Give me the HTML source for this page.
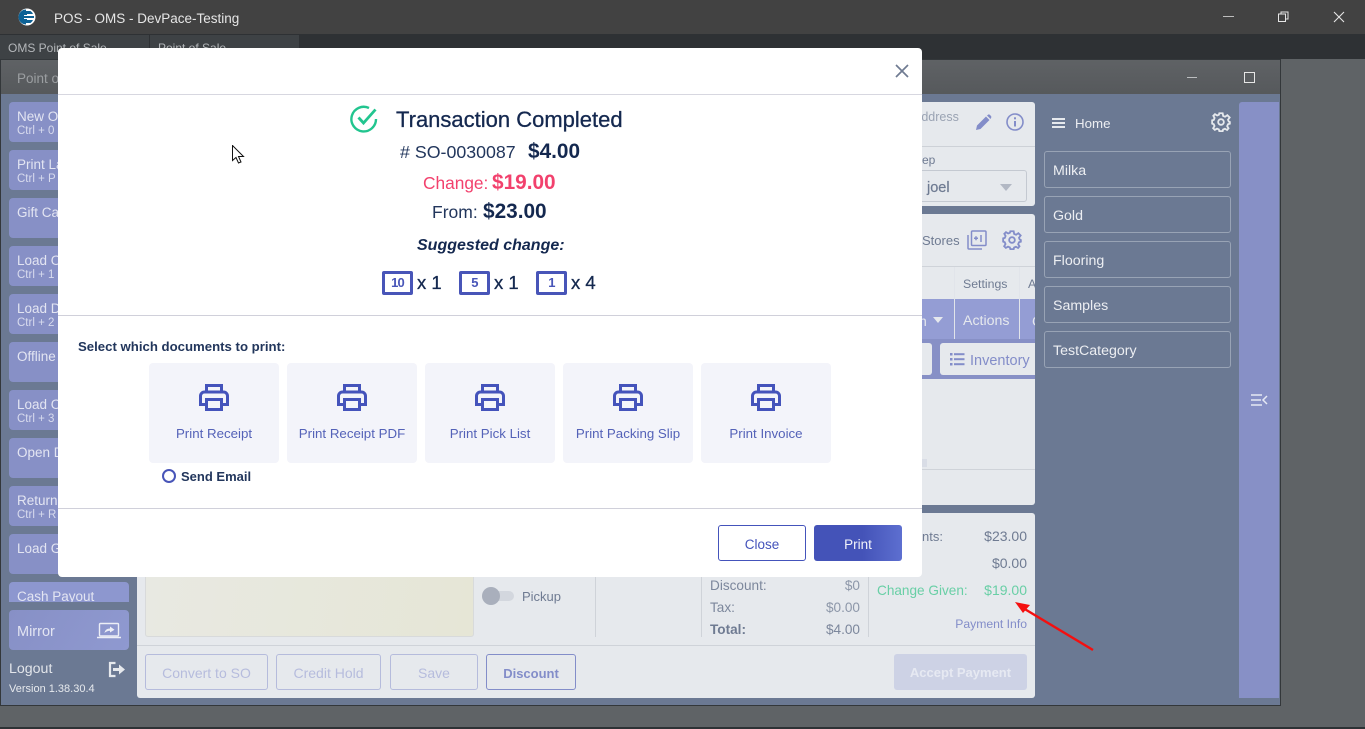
<!DOCTYPE html>
<html><head><meta charset="utf-8"><title>POS - OMS - DevPace-Testing</title>
<style>
html,body{margin:0;padding:0;width:1365px;height:729px;overflow:hidden;background:#5f6366;font-family:"Liberation Sans",sans-serif}
div,span.t{position:absolute;box-sizing:border-box}
.t{position:absolute;white-space:nowrap;line-height:20px;height:20px;margin-top:1px}
.c{text-align:center}
.sb{left:9px;width:120px;height:40px;border-radius:4px;background:#8790c6;color:#e3e5f2;overflow:hidden}
.sb .a{position:absolute;left:8px;top:7px;font-size:13.5px;line-height:16px;white-space:nowrap}
.sb .b{position:absolute;left:8px;top:22px;font-size:11.5px;line-height:14px;white-space:nowrap;color:#d8dbee}
.cat{left:1044px;width:187px;height:37px;border:1px solid #98a3b5;border-radius:3px;color:#eceef2;font-size:14.2px;line-height:38px;padding-left:8px}
.panel{background:#e6e9ed;border-radius:3px}
.g{color:#6f7b92}
.doc{top:363px;width:130px;height:100px;background:#f3f4fa;border-radius:4px}
.doc svg{position:absolute;left:50px;top:21px}
.doc span{position:absolute;left:0;width:130px;top:60px;text-align:center;color:#5462b8;font-size:13.3px;line-height:20px;white-space:nowrap;margin-top:1px}
.dis{top:654px;height:36px;border:1px solid #b5bbdc;border-radius:3px;color:#b6bcdd;font-size:14px;line-height:37px;text-align:center}
.nav{color:#0f2a52}
.bill{top:271px;width:31px;height:24px;border:3px solid #4855b8;border-radius:2px;color:#4855b8;font-size:13px;font-weight:bold;line-height:18px;text-align:center;letter-spacing:-.8px}
</style></head><body>

<div style="left:0;top:0;width:1365px;height:34px;background:#424242"></div>
<div style="left:0;top:34px;width:1365px;height:25px;background:#2e3134"></div>
<div style="left:0;top:35px;width:149px;height:24px;background:#3e4245"></div>
<div style="left:150px;top:35px;width:149px;height:24px;background:#3e4245"></div>
<svg style="position:absolute;left:18px;top:8px" width="18" height="18" viewBox="0 0 18 18"><circle cx="9" cy="9" r="8.5" fill="#fff"/><path d="M8 1.5A7.5 7.5 0 0 0 8 16.5Z" fill="#0d6296"/><path d="M8 3H12.5A7 7 0 0 1 15 6H9V8H16V10H9V12H15A7 7 0 0 1 12.5 15H8Z" fill="#0d6296"/><path d="M6 7.5H13M6 10.5H13" stroke="#fff" stroke-width="1"/></svg>
<span class="t" style="left:54px;top:8px;font-size:13.5px;color:#e6e6e6">POS - OMS - DevPace-Testing</span>
<span class="t" style="left:8px;top:37px;font-size:12px;color:#b4b7ba">OMS Point of Sale</span>
<span class="t" style="left:158px;top:37px;font-size:12px;color:#b4b7ba">Point of Sale</span>
<div style="left:1223px;top:16px;width:11px;height:1px;background:#bdbdbd"></div>
<svg style="position:absolute;left:1277px;top:11px" width="13" height="12" viewBox="0 0 13 12" fill="none" stroke="#e6e6e6"><rect x="1.5" y="3" width="7" height="7.5"/><path d="M4 2.5V1H11V8H9"/></svg>
<svg style="position:absolute;left:1333px;top:11px" width="12" height="12" viewBox="0 0 12 12" stroke="#e6e6e6" stroke-width="1.1"><path d="M1 1L11 11M11 1L1 11"/></svg>

<div style="left:0;top:59px;width:1281px;height:647px;background:#6b7993;border:1px solid #33373a"></div>
<div style="left:1px;top:60px;width:1279px;height:34px;background:linear-gradient(#5f6265,#56595c)"></div>
<span class="t" style="left:17px;top:68px;font-size:13.5px;color:#9b9ea1">Point of Sale</span>
<div style="left:1187px;top:77px;width:10px;height:1px;background:#bcbec0"></div>
<div style="left:1244px;top:72px;width:11px;height:11px;border:1px solid #e6e6e6"></div>

<div class="sb" style="top:102px"><span class="a">New Order</span><span class="b">Ctrl + 0</span></div>
<div class="sb" style="top:150px"><span class="a">Print Last</span><span class="b">Ctrl + P</span></div>
<div class="sb" style="top:198px"><span class="a">Gift Card</span></div>
<div class="sb" style="top:246px"><span class="a">Load Order</span><span class="b">Ctrl + 1</span></div>
<div class="sb" style="top:294px"><span class="a">Load Draft</span><span class="b">Ctrl + 2</span></div>
<div class="sb" style="top:342px"><span class="a">Offline</span></div>
<div class="sb" style="top:390px"><span class="a">Load Open</span><span class="b">Ctrl + 3</span></div>
<div class="sb" style="top:438px"><span class="a">Open Drawer</span></div>
<div class="sb" style="top:486px"><span class="a">Return</span><span class="b">Ctrl + R</span></div>
<div class="sb" style="top:534px"><span class="a">Load Gift</span></div>
<div class="sb" style="top:582px;height:20px;border-radius:4px 4px 0 0;background:#8d97cf"><span class="a" style="top:7px">Cash Payout</span></div>
<div class="sb" style="top:610px;background:linear-gradient(120deg,#8790c6,#8f99d0)"><span class="a" style="top:14px;font-size:14.5px">Mirror</span>
<svg style="position:absolute;left:88px;top:12px" width="24" height="17" viewBox="0 0 24 17" fill="none" stroke="#eceef6"><rect x="2.5" y="1.5" width="19" height="12.5" rx="1" stroke-width="1.4"/><path d="M0 15.5H24" stroke-width="1.4"/><path d="M7.5 11C8 8 10 6.500 13 6.500V4.500L17.500 7.800L13 10.500V8.700C11 8.700 9 9.500 7.500 11Z" fill="#eceef6" stroke="none"/></svg></div>
<span class="t" style="left:9px;top:658px;font-size:14.2px;color:#e2e5ea">Logout</span>
<svg style="position:absolute;left:108px;top:661px" width="18" height="17" viewBox="0 0 18 17" fill="none" stroke="#e6e9ed" stroke-width="2.2"><path d="M7.5 2H2V15H7.5"/><path d="M5 8.5H12" stroke-width="3"/><path d="M11 3.5L17 8.5L11 13.5Z" fill="#e6e9ed" stroke="none"/></svg>
<span class="t" style="left:9px;top:678px;font-size:11px;color:#e6e9ed">Version 1.38.30.4</span>

<div class="panel" style="left:137px;top:102px;width:898px;height:104px"></div>
<div style="left:922px;top:146px;width:113px;height:1px;background:#cdd1d7"></div>
<span class="t" style="left:913px;top:106px;font-size:12.5px;color:#9aa3b3">Address</span>
<svg style="position:absolute;left:975px;top:114px" width="17" height="17" viewBox="0 0 17 17"><path d="M1 16L2 11.500L11 2.500L14.500 6L5.500 15Z M12 1.500L13 .7Q14 0 15 1L16 2Q16.700 3 16 4L15.500 5Z" fill="#838dc9"/></svg>
<svg style="position:absolute;left:1006px;top:113px" width="18" height="18" viewBox="0 0 18 18" fill="none" stroke="#838dc9" stroke-width="1.6"><circle cx="9" cy="9" r="8"/><path d="M9 8V13.500" stroke-width="2"/><path d="M9 4.300V6.300" stroke-width="2"/></svg>
<span class="t" style="left:922px;top:149px;font-size:12px;color:#6f7b92">ep</span>
<div style="left:900px;top:170px;width:127px;height:32px;border:1px solid #c4c9d1;border-radius:3px"></div>
<span class="t" style="left:927px;top:177px;font-size:14.5px;color:#6f7b92;-webkit-text-stroke:.2px #6f7b92">joel</span>
<div style="left:1000px;top:184px;width:0;height:0;border-left:6px solid transparent;border-right:6px solid transparent;border-top:7px solid #b2b8c4"></div>

<div class="panel" style="left:137px;top:214px;width:898px;height:291px"></div>
<span class="t" style="left:922px;top:230px;font-size:13px;color:#6f7b92">Stores</span>
<svg style="position:absolute;left:967px;top:230px" width="20" height="20" viewBox="0 0 20 20" fill="none" stroke="#838dc9" stroke-width="1.5"><rect x="4.500" y="1" width="14.500" height="14.500" rx="1"/><path d="M1 5V18Q1 19 2 19H15"/><path d="M7 8.200H11M9 6.200V10.200M14 5V12" stroke-width="1.500"/></svg>
<svg style="position:absolute;left:1002px;top:230px" width="20" height="20" viewBox="0 0 24 24" fill="none" stroke="#838dc9" stroke-width="2.2"><circle cx="12" cy="12" r="3.4"/><path d="M10 1.500H14L14.600 4.700L16.900 5.700L19.600 3.800L22.400 6.600L20.400 9.300L21.300 11.500L22.600 12L22.600 14L20.400 14.700L19.400 17L21 19.600L19.300 21.600L16.700 20.100L14.500 21L14 23H10L9.400 20.900L7.200 20L4.600 21.500L2.600 19.500L4.200 16.900L3.300 14.700L1.400 14V10L3.400 9.400L4.300 7.200L2.800 4.600L4.800 2.600L7.400 4.200L9.500 3.300Z"/></svg>
<div style="left:922px;top:266px;width:113px;height:1px;background:#cfd3d9"></div>
<div style="left:922px;top:299px;width:113px;height:40px;background:#949dd4"></div>
<div style="left:922px;top:339px;width:113px;height:40px;background:#8790c6"></div>
<div style="left:954px;top:267px;width:1px;height:72px;background:#e1e4ea"></div>
<div style="left:1019px;top:267px;width:1px;height:72px;background:#e1e4ea"></div>
<span class="t" style="left:963px;top:273px;font-size:12.3px;color:#6f7b92">Settings</span>
<span class="t" style="left:1028px;top:273px;font-size:12.3px;color:#6f7b92;width:7px;overflow:hidden">A</span>
<div style="left:933px;top:317px;width:0;height:0;border-left:5px solid transparent;border-right:5px solid transparent;border-top:6px solid #e6e9ed"></div>
<span class="t" style="left:919px;top:310px;font-size:14px;color:#e6e9ed">n</span>
<span class="t" style="left:963px;top:310px;font-size:14.2px;color:#e6e9ed">Actions</span>
<span class="t" style="left:1032px;top:310px;font-size:14px;color:#e6e9ed;width:3px;overflow:hidden">C</span>
<div style="left:922px;top:343px;width:10px;height:32px;background:#e6e9ed;border-radius:0 3px 3px 0"></div>
<div style="left:940px;top:343px;width:95px;height:32px;background:#e6e9ed;border-radius:3px 0 0 3px"></div>
<svg style="position:absolute;left:950px;top:352px" width="15" height="15" viewBox="0 0 15 15" fill="#838dc9"><rect y="1" width="2.500" height="2.500"/><rect y="6" width="2.500" height="2.500"/><rect y="11" width="2.500" height="2.500"/><rect x="4" y="1.200" width="10.500" height="2"/><rect x="4" y="6.200" width="10.500" height="2"/><rect x="4" y="11.200" width="10.500" height="2"/></svg>
<span class="t" style="left:970px;top:350px;font-size:14.5px;color:#838dc9">Inventory</span>
<div style="left:922px;top:459px;width:5px;height:8px;background:#d9dde6"></div>
<div style="left:922px;top:469px;width:113px;height:1px;background:#cfd3d9"></div>

<div class="panel" style="left:137px;top:513px;width:898px;height:185px"></div>
<div style="left:145px;top:570px;width:329px;height:67px;background:linear-gradient(100deg,#e8e9e2,#e6e6d6);border:1px solid #d8dadb;border-radius:3px"></div>
<div style="left:482px;top:591px;width:32px;height:10px;background:#d3d7de;border-radius:5px"></div>
<div style="left:482px;top:587px;width:18px;height:18px;background:#a9afbc;border-radius:50%"></div>
<span class="t" style="left:522px;top:586px;font-size:13px;color:#6f7b92">Pickup</span>
<div style="left:595px;top:577px;width:1px;height:60px;background:#cfd3d9"></div>
<div style="left:701px;top:577px;width:1px;height:60px;background:#cfd3d9"></div>
<div style="left:868px;top:577px;width:1px;height:60px;background:#cfd3d9"></div>
<span class="t" style="left:710px;top:575px;font-size:13.6px;color:#7c879c">Discount:</span>
<span class="t" style="left:760px;width:100px;text-align:right;top:575px;font-size:13.6px;color:#8d97a9">$0</span>
<span class="t" style="left:710px;top:597px;font-size:13.6px;color:#7c879c">Tax:</span>
<span class="t" style="left:760px;width:100px;text-align:right;top:597px;font-size:13.6px;color:#8d97a9">$0.00</span>
<span class="t" style="left:710px;top:619px;font-size:13.6px;font-weight:bold;color:#6f7b92">Total:</span>
<span class="t" style="left:760px;width:100px;text-align:right;top:619px;font-size:13.6px;color:#7c879c">$4.00</span>
<span class="t" style="left:922px;top:526px;font-size:13px;color:#6f7b92">nts:</span>
<span class="t" style="left:927px;width:100px;text-align:right;top:525px;font-size:14px;color:#6f7b92">$23.00</span>
<span class="t" style="left:927px;width:100px;text-align:right;top:552px;font-size:14px;color:#6f7b92">$0.00</span>
<span class="t" style="left:877px;top:580px;font-size:13.6px;color:#69cfa6">Change Given:</span>
<span class="t" style="left:927px;width:100px;text-align:right;top:579px;font-size:14px;color:#69cfa6">$19.00</span>
<span class="t" style="left:927px;width:100px;text-align:right;top:613px;font-size:12.2px;color:#838dc9">Payment Info</span>
<div style="left:137px;top:645px;width:898px;height:1px;background:#cfd3d9"></div>
<div class="dis" style="left:145px;width:123px">Convert to SO</div>
<div class="dis" style="left:276px;width:105px">Credit Hold</div>
<div class="dis" style="left:390px;width:88px">Save</div>
<div class="dis" style="left:486px;width:90px;border-color:#838dc9;color:#838dc9;font-weight:bold;font-size:13px">Discount</div>
<div class="dis" style="left:894px;width:133px;background:#cdd2e5;border:0;color:#e6e9f2;font-weight:bold;font-size:13px;line-height:38px">Accept Payment</div>

<svg style="position:absolute;left:1012px;top:600px" width="85" height="52" viewBox="0 0 85 52"><path d="M81 50L11 8" stroke="#f40f0f" stroke-width="2.4"/><path d="M3 2L18 5L11 13Z" fill="#f40f0f"/></svg>

<svg style="position:absolute;left:1052px;top:117px" width="14" height="12" viewBox="0 0 14 12" fill="#e6e9ed"><rect y="1" width="13" height="2"/><rect y="5" width="13" height="2"/><rect y="9" width="13" height="2"/></svg>
<span class="t" style="left:1075px;top:113px;font-size:13.3px;color:#eceef2">Home</span>
<svg style="position:absolute;left:1211px;top:112px" width="20" height="20" viewBox="0 0 24 24" fill="none" stroke="#e6e9ed" stroke-width="2.2"><circle cx="12" cy="12" r="3.4"/><path d="M10 1.500H14L14.600 4.700L16.900 5.700L19.600 3.800L22.400 6.600L20.400 9.300L21.300 11.500L22.600 12L22.600 14L20.400 14.700L19.400 17L21 19.600L19.300 21.600L16.700 20.100L14.500 21L14 23H10L9.400 20.900L7.200 20L4.600 21.500L2.600 19.500L4.200 16.900L3.300 14.700L1.400 14V10L3.400 9.400L4.300 7.200L2.800 4.600L4.800 2.600L7.400 4.200L9.500 3.300Z"/></svg>
<div class="cat" style="top:151px">Milka</div>
<div class="cat" style="top:196px">Gold</div>
<div class="cat" style="top:241px">Flooring</div>
<div class="cat" style="top:286px">Samples</div>
<div class="cat" style="top:331px">TestCategory</div>
<div style="left:1239px;top:102px;width:40px;height:596px;background:#8790c6;border-radius:3px 0 0 0"></div>
<svg style="position:absolute;left:1251px;top:394px" width="17" height="12" viewBox="0 0 17 12" stroke="#e6e9f4" stroke-width="1.5" fill="none"><path d="M0 1H11M0 6H10M0 11H11M16 2L12 6L16 10"/></svg>

<div style="left:0;top:727px;width:1365px;height:2px;background:#2d3235"></div>

<!-- modal -->
<div style="left:58px;top:48px;width:864px;height:529px;background:#fff;border-radius:4px"></div>
<div style="left:58px;top:94px;width:864px;height:1px;background:#d7d7e0"></div>
<div style="left:58px;top:315px;width:864px;height:1px;background:#d0d0da"></div>
<div style="left:58px;top:508px;width:864px;height:1px;background:#d0d0da"></div>
<svg style="position:absolute;left:895px;top:64px" width="14" height="14" viewBox="0 0 14 14" stroke="#6f7b92" stroke-width="1.7"><path d="M1 1L13 13M13 1L1 13"/></svg>
<svg style="position:absolute;left:232px;top:145px" width="13" height="19" viewBox="0 0 13 19"><path d="M.5.5V15.500L4 12.500L6.500 18L9 17L6.500 11.500H11.500Z" fill="#fff" stroke="#111" stroke-width="1"/></svg>

<svg style="position:absolute;left:350px;top:105px" width="28" height="28" viewBox="0 0 28 28" fill="none" stroke="#22c58f" stroke-width="2.4"><path d="M26 14A12.300 12.300 0 1 1 19 3"/><path d="M8.500 12.500L13.500 18L25.500 4.500" stroke-width="2.800"/></svg>
<span class="t" style="left:396px;top:108px;font-size:22px;line-height:22px;height:22px;color:#14284f;-webkit-text-stroke:.3px #14284f">Transaction Completed</span>
<span class="t" style="left:400px;top:141px;font-size:17.800px;color:#22365c"># SO-0030087</span>
<span class="t" style="left:528px;top:141px;font-size:20.800px;font-weight:bold;color:#14284f">$4.00</span>
<span class="t" style="left:423px;top:172px;font-size:17.300px;color:#f2416d">Change:</span>
<span class="t" style="left:492px;top:172px;font-size:20.800px;font-weight:bold;color:#f2416d">$19.00</span>
<span class="t" style="left:432px;top:201px;font-size:17.500px;color:#22365c">From:</span>
<span class="t" style="left:483px;top:201px;font-size:20.800px;font-weight:bold;color:#14284f">$23.00</span>
<span class="t" style="left:417px;top:235px;font-size:16px;font-weight:bold;font-style:italic;color:#14284f">Suggested change:</span>
<div class="bill" style="left:382px">10</div>
<span class="t" style="left:417px;top:272px;font-size:18.500px;color:#14284f;-webkit-text-stroke:.3px #14284f">x 1</span>
<div class="bill" style="left:459px">5</div>
<span class="t" style="left:494px;top:272px;font-size:18.500px;color:#14284f;-webkit-text-stroke:.3px #14284f">x 1</span>
<div class="bill" style="left:536px">1</div>
<span class="t" style="left:571px;top:272px;font-size:18.500px;color:#14284f;-webkit-text-stroke:.3px #14284f">x 4</span>

<span class="t" style="left:78px;top:336px;font-size:13.200px;font-weight:bold;color:#22365c">Select which documents to print:</span>

<div class="doc" style="left:149px"><svg width="30" height="27" viewBox="0 0 30 27" fill="none" stroke="#4453bb" stroke-width="3"><path d="M7.500 8V1.500H22.500V8"/><path d="M7 20.500H1.500V12A4 4 0 0 1 5.500 8H24.500A4 4 0 0 1 28.500 12V20.500H23"/><rect x="7.500" y="15.500" width="15" height="10"/></svg><span>Print Receipt</span></div>
<div class="doc" style="left:287px"><svg width="30" height="27" viewBox="0 0 30 27" fill="none" stroke="#4453bb" stroke-width="3"><path d="M7.500 8V1.500H22.500V8"/><path d="M7 20.500H1.500V12A4 4 0 0 1 5.500 8H24.500A4 4 0 0 1 28.500 12V20.500H23"/><rect x="7.500" y="15.500" width="15" height="10"/></svg><span>Print Receipt PDF</span></div>
<div class="doc" style="left:425px"><svg width="30" height="27" viewBox="0 0 30 27" fill="none" stroke="#4453bb" stroke-width="3"><path d="M7.500 8V1.500H22.500V8"/><path d="M7 20.500H1.500V12A4 4 0 0 1 5.500 8H24.500A4 4 0 0 1 28.500 12V20.500H23"/><rect x="7.500" y="15.500" width="15" height="10"/></svg><span>Print Pick List</span></div>
<div class="doc" style="left:563px"><svg width="30" height="27" viewBox="0 0 30 27" fill="none" stroke="#4453bb" stroke-width="3"><path d="M7.500 8V1.500H22.500V8"/><path d="M7 20.500H1.500V12A4 4 0 0 1 5.500 8H24.500A4 4 0 0 1 28.500 12V20.500H23"/><rect x="7.500" y="15.500" width="15" height="10"/></svg><span>Print Packing Slip</span></div>
<div class="doc" style="left:701px"><svg width="30" height="27" viewBox="0 0 30 27" fill="none" stroke="#4453bb" stroke-width="3"><path d="M7.500 8V1.500H22.500V8"/><path d="M7 20.500H1.500V12A4 4 0 0 1 5.500 8H24.500A4 4 0 0 1 28.500 12V20.500H23"/><rect x="7.500" y="15.500" width="15" height="10"/></svg><span>Print Invoice</span></div>

<div style="left:162px;top:469px;width:14px;height:14px;border:2px solid #4855b8;border-radius:50%"></div>
<span class="t" style="left:181px;top:466px;font-size:13px;font-weight:bold;color:#22365c">Send Email</span>
<div style="left:718px;top:525px;width:88px;height:36px;border:1px solid #4453bb;border-radius:3px;background:#fff;color:#4453bb;font-size:13.500px;line-height:37px;text-align:center">Close</div>
<div style="left:814px;top:525px;width:88px;height:36px;border-radius:3px;background:linear-gradient(90deg,#4453b8 55%,#5d6fd0);color:#f2f3fa;font-size:13.500px;line-height:39px;text-align:center">Print</div>
</body></html>
